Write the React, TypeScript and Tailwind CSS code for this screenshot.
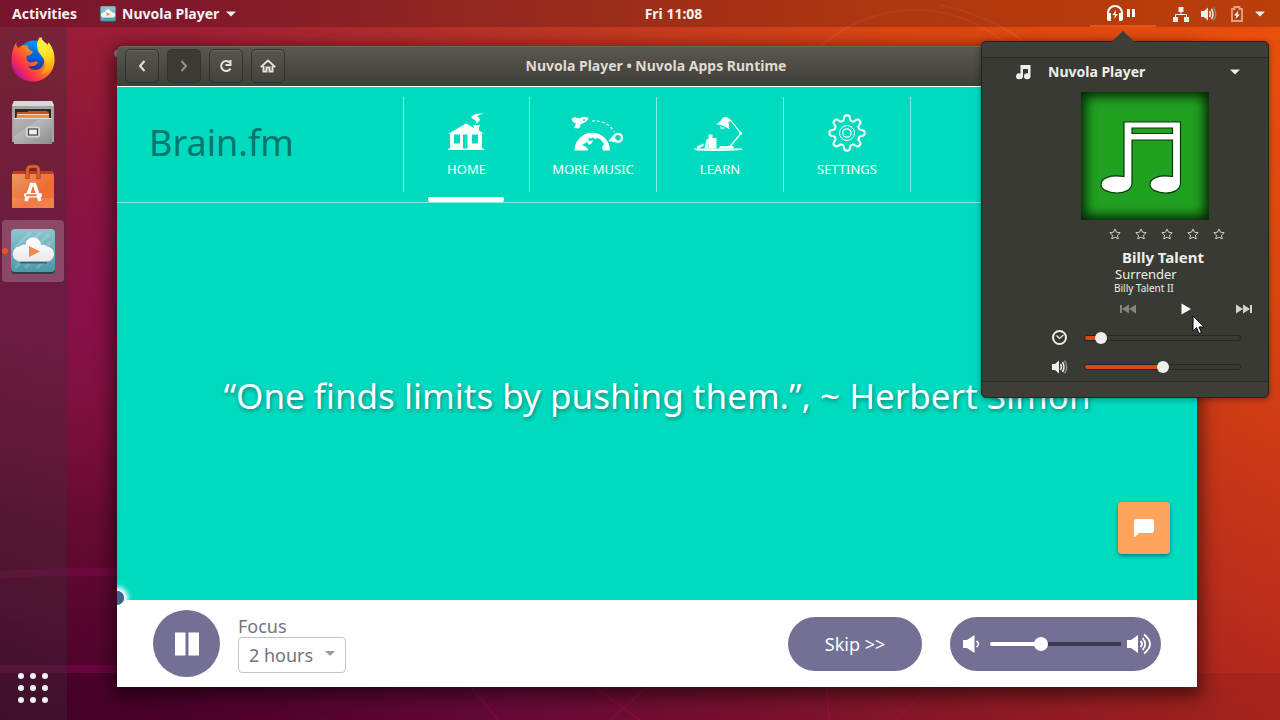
import type { ReactNode } from "react";

const UI = "font-['Noto_Sans','Open_Sans',sans-serif]";

function Wallpaper() {
  return (
    <svg className="absolute inset-0 h-full w-full" viewBox="0 0 1280 720" preserveAspectRatio="none" aria-hidden="true">
      <defs>
        <linearGradient id="base" x1="0" y1="0" x2="1" y2="0">
          <stop offset="0" stopColor="#951b3a" />
          <stop offset="0.15" stopColor="#a01f36" />
          <stop offset="0.35" stopColor="#b5302a" />
          <stop offset="0.7" stopColor="#dc4613" />
          <stop offset="1" stopColor="#ea4f0e" />
        </linearGradient>
        <linearGradient id="low" x1="0" y1="0" x2="1" y2="0">
          <stop offset="0" stopColor="#42002a" />
          <stop offset="0.2" stopColor="#54032f" />
          <stop offset="0.4" stopColor="#6c0a3c" />
          <stop offset="0.6" stopColor="#801232" />
          <stop offset="0.8" stopColor="#981d28" />
          <stop offset="1" stopColor="#b0261e" />
        </linearGradient>
        <linearGradient id="fade" x1="0" y1="0" x2="0" y2="1">
          <stop offset="0.05" stopColor="#fff" stopOpacity="0" />
          <stop offset="0.4" stopColor="#fff" stopOpacity="0.22" />
          <stop offset="1" stopColor="#fff" stopOpacity="1" />
        </linearGradient>
        <mask id="down"><rect width="1280" height="720" fill="url(#fade)" /></mask>
        <radialGradient id="plum" cx="0.05" cy="0.42" r="0.3">
          <stop offset="0" stopColor="#870f4c" stopOpacity="0.9" />
          <stop offset="1" stopColor="#870f4c" stopOpacity="0" />
        </radialGradient>
      </defs>
      <rect width="1280" height="720" fill="url(#base)" />
      <rect width="1280" height="720" fill="url(#low)" mask="url(#down)" />
      <rect width="1280" height="720" fill="url(#plum)" />
      <g fill="none" stroke="#8a0a56" strokeOpacity="0.4">
        <path d="M0 575Q60 570 140 573" strokeWidth="8" />
        <path d="M0 669H140" strokeWidth="8" />
      </g>
      <rect y="673" width="1280" height="47" fill="#1a0010" fillOpacity=".08" />
      <g fill="none" stroke="#f06" strokeOpacity="0.14" strokeWidth="2">
        <path d="M465 680Q482 700 500 722M585 680L640 720M655 680L610 720M826 680L829 720M935 680L895 720" />
      </g>
      <g fill="none" stroke="#fff" strokeOpacity="0.06" strokeWidth="2">
        <circle cx="915" cy="150" r="140" />
        <path d="M940 5Q990 15 1030 46" />
      </g>
    </svg>
  );
}

function NuvolaIcon({ className }: { className: string }) {
  return (
    <svg viewBox="0 0 44 46" className={className} aria-hidden="true">
      <defs>
        <linearGradient id="nv" x1="0" y1="0" x2="0" y2="1">
          <stop offset="0" stopColor="#8cc6d0" />
          <stop offset="1" stopColor="#4a98a8" />
        </linearGradient>
        <linearGradient id="cl" x1="0" y1="0" x2="0" y2="1">
          <stop offset="0" stopColor="#fff" />
          <stop offset="1" stopColor="#e9e9e9" />
        </linearGradient>
      </defs>
      <rect y="2" width="44" height="44" rx="4" fill="#28434f" />
      <rect y="1" width="44" height="43" rx="4" fill="url(#nv)" />
      <path d="M4 20L20 4M4 30L30 4M14 40L40 14M26 40L42 24M4 40L38 6" stroke="#fff" strokeOpacity=".16" strokeWidth="3" />
      <path d="M9 34.500H36" stroke="#2b6573" strokeWidth="2" />
      <path d="M10 33.500a7.500 7.500 0 0 1-1.500-15Q12 15.500 14.500 17C14.500 7 29.500 7 30 17Q33 15.500 36 18.500A7.500 7.500 0 0 1 35 33.500Z" fill="url(#cl)" />
      <path d="M18 18L29 23.500L18 29Z" fill="#f08a4b" />
    </svg>
  );
}

function Firefox() {
  return (
    <svg viewBox="0 0 44 46" className="h-[46px] w-11" aria-hidden="true">
      <defs>
        <linearGradient id="fx" x1="0.9" y1="0.1" x2="0.1" y2="0.85">
          <stop offset="0" stopColor="#fff44f" />
          <stop offset="0.3" stopColor="#ffb21e" />
          <stop offset="0.55" stopColor="#ff6a24" />
          <stop offset="0.8" stopColor="#fa2a52" />
          <stop offset="1" stopColor="#b5179e" />
        </linearGradient>
        <linearGradient id="fy" x1="0.3" y1="0" x2="0.5" y2="1">
          <stop offset="0" stopColor="#fff44f" />
          <stop offset="0.5" stopColor="#ffe226" />
          <stop offset="1" stopColor="#ff980e" />
        </linearGradient>
        <linearGradient id="fb" x1="0.7" y1="0" x2="0.4" y2="1">
          <stop offset="0" stopColor="#00a3f4" />
          <stop offset="0.5" stopColor="#0060df" />
          <stop offset="1" stopColor="#3a1c7c" />
        </linearGradient>
      </defs>
      <circle cx="23" cy="21" r="16.500" fill="url(#fb)" />
      <path d="M5.500 6C5 9 6 11 7.500 12C9 10 12 9 14 9.500L17 9C16 12 18 14 22 15.500C21 18.500 18 19.500 16 20C14.500 22.500 16 25 18 26C22 27.500 24 24 27 26.500C25 30 21 31 17 30C21 36 31 35 33 27C34 20 29 17 27.500 13C26 8 28 3 30.500 1C31 5 35 7 37 9L37.500 6.500C42 12 44 18 43.500 25C43 37 33 45.500 22 45.500C9 45.500 0 36 0.500 24C0.500 17 2.500 10 5.500 6Z" fill="url(#fx)" />
      <path d="M29 1C31 5 35 7 37 9L37.500 6.500C42 12 44 20 42 27C39 37 33 38 30 38C35 33 36 28 33 23C29 18 22 11 29 1Z" fill="url(#fy)" />
    </svg>
  );
}

function Files() {
  return (
    <svg viewBox="0 0 44 46" className="h-[46px] w-11" aria-hidden="true">
      <defs>
        <linearGradient id="fl" x1="0" y1="0" x2="1" y2="1">
          <stop offset="0" stopColor="#b5b5b5" />
          <stop offset="0.35" stopColor="#a9a9a9" />
          <stop offset="0.36" stopColor="#b9b9b9" />
          <stop offset="1" stopColor="#8a8a8a" />
        </linearGradient>
      </defs>
      <path d="M3 1H41L43 5V42H1V5Z" fill="#a5a5a5" />
      <path d="M3 1H41L43 6H1Z" fill="#d9d9d9" />
      <rect x="4" y="9" width="36" height="10" fill="#292929" />
      <path d="M6 12H17V11H36L38 13V20H5Z" fill="#c5571b" />
      <path d="M6 14H38V20H6Z" fill="#eb9149" />
      <path d="M6 14.500H38" stroke="#f8d2a8" strokeWidth="1" />
      <path d="M3 18H41V44H3Z" fill="url(#fl)" />
      <path d="M3 18.500H41" stroke="#dedede" />
      <rect x="15" y="26.500" width="14" height="11" rx="2" fill="#d4d4d4" />
      <rect x="17.500" y="29" width="9" height="6" fill="#eee" stroke="#444" strokeWidth="1.200" />
    </svg>
  );
}

function Software() {
  return (
    <svg viewBox="0 0 44 46" className="h-[46px] w-11" aria-hidden="true">
      <defs>
        <linearGradient id="sw" x1="0" y1="0" x2="1" y2="1">
          <stop offset="0" stopColor="#eb9a63" />
          <stop offset="0.6" stopColor="#ef6c33" />
          <stop offset="1" stopColor="#f0763f" />
        </linearGradient>
      </defs>
      <path d="M2 7H42L43 11H1Z" fill="#b8401b" />
      <path d="M1 10H43V44H1Z" fill="url(#sw)" />
      <path d="M1 34H43V44H1Z" fill="#fff" fillOpacity=".1" />
      <path d="M16.500 15V6Q16.500 2.500 20 2.500H24Q27.500 2.500 27.500 6V15" fill="none" stroke="#9a3413" strokeWidth="4" />
      <path d="M16.500 14.500V6Q16.500 2.500 20 2.500H24Q27.500 2.500 27.500 6V14.500" fill="none" stroke="#e0612c" strokeWidth="2.600" />
      <path d="M15 37L20.500 20.500H23.500L29 37" fill="none" stroke="#fff" strokeWidth="3.600" />
      <rect x="13" y="29" width="18" height="4.500" rx="2" fill="#fff" />
      <rect x="15" y="30.200" width="11" height="2" rx="1" fill="#ee7a3e" />
    </svg>
  );
}

function HomeArt() {
  return (
    <svg viewBox="0 0 52 40" className="h-10 w-[52px]" fill="#fff" aria-hidden="true">
      <path d="M7 21L25 10.500L33 15V13.500H32V12H39V13.500H38V17.500L43 20.500H41V35.500H43V37H7V35.500H9V21Z" />
      <g fill="#00dbc0">
        <rect x="13" y="21.500" width="6" height="9" />
        <rect x="22" y="21.500" width="4.500" height="14" />
        <rect x="31" y="21.500" width="6" height="9" />
      </g>
      <path d="M24.500 21.500V35.500" stroke="#fff" strokeOpacity=".3" strokeWidth=".5" />
      <path d="M34 10.500Q37 8 32 6Q28 4 33.500 1.500Q37 0 43 .5Q37 2 36 3.500Q40 5.500 38.500 8Q37 10 34 10.500Z" />
    </svg>
  );
}

function MusicArt() {
  return (
    <svg viewBox="-8 0 62 40" className="h-10 w-[62px]" fill="#fff" aria-hidden="true">
      <path d="M4.500 37.500A17.700 17.700 0 0 1 40 37.500H33L32 34L34 31L31 27L28 25L25 26L23 24.500L20 25.500L18 25L19 28L23 27.500L22 30L19 32L17 29L14 31L12 32L16 34L18 36L18 37.500Z" />
      <path d="M1.500 5.500L5 4L9 5.500Q14 3 18.500 5Q17 9 11 11L9 15.500L4 15L6 10.500Q2 9.500 1.500 5.500Z" />
      <circle cx="14" cy="7" r="1" fill="#00dbc0" />
      <path d="M22 8Q37 7 44 18.500" fill="none" stroke="#fff" strokeWidth="1.200" strokeDasharray="3 2" />
      <path fillRule="evenodd" d="M38.500 28L43.500 22A5.200 5.200 0 1 1 48.500 30ZM48 22A2.700 2.700 0 1 0 48 27.500A2.700 2.700 0 1 0 48 22Z" />
    </svg>
  );
}

function LearnArt() {
  return (
    <svg viewBox="0 0 54 40" className="h-10 w-[54px]" fill="#fff" aria-hidden="true">
      <path d="M0 35.500H49V37Q26 38.500 4 37.500Z" />
      <path d="M26 35.500Q26 33 29 33H39Q41 33 41 35.500Z" />
      <path d="M37 33.500L48 20.500L37 6.500" fill="none" stroke="#fff" strokeWidth="1.200" />
      <circle cx="47.500" cy="20.500" r="1.600" />
      <path d="M29 5.500Q30 3.500 34 4Q36 4.500 37.500 7.500L35.500 9.500L36.500 16.500Q30 11.500 23 11.500Q28 8.500 29 5.500Z" />
      <path d="M27 13.500Q27 16.500 29.500 16.500Q32 16.500 32 14.500Z" fillOpacity=".6" />
      <path d="M4 33.500L10 30.500L11 32.500L6 35.500H4ZM11.500 35.500L13.500 26L15.500 26.500L15 35.500ZM15.500 21.500H19.500V25H23.500V35.500H15.500Z" />
    </svg>
  );
}

const gearPath = Array.from({ length: 97 }, (_, i) => {
  const t = (i / 96) * Math.PI * 2;
  const r = 15.2 + 2.5 * Math.tanh(2.2 * Math.cos(8 * t));
  return `${i ? "L" : "M"}${(20 + r * Math.cos(t)).toFixed(2)} ${(20 + r * Math.sin(t)).toFixed(2)}`;
}).join("") + "Z";

function SettingsArt() {
  return (
    <svg viewBox="0 0 40 40" className="size-10" fill="none" stroke="#fff" aria-hidden="true">
      <path d={gearPath} strokeWidth="2" strokeLinejoin="round" />
      <circle cx="20" cy="20" r="7.500" strokeWidth="1" />
      <circle cx="20" cy="20" r="4.200" strokeWidth="1.200" />
    </svg>
  );
}

function Speaker({ className }: { className: string }) {
  return (
    <svg viewBox="0 0 16 16" className={className} fill="none" aria-hidden="true">
      <path d="M0 5H3L7 1.500V14.500L3 11H0Z" fill="#eee" />
      <path d="M8.500 5Q10.500 8 8.500 11M10.500 3Q13.500 8 10.500 13" stroke="#eee" strokeWidth="1.500" />
      <path d="M12.500 1.500Q17 8 12.500 14.500" stroke="#888" strokeWidth="1.500" />
    </svg>
  );
}

function Caret({ className = "" }: { className?: string }) {
  return (
    <svg viewBox="0 0 10 6" className={`h-1.5 w-2.5 ${className}`} fill="#eee" aria-hidden="true">
      <path d="M0 .5H10L5 5.500Z" />
    </svg>
  );
}

function AlbumNote() {
  return (
    <svg viewBox="0 0 82 74" className="h-[74px] w-[82px]" aria-hidden="true">
      <path
        fillRule="evenodd"
        d="M24 1H80.500V62C80.500 68.500 74 72 66 72C57 72 50 68.500 50 63.500C50 57 59 53.500 72.500 55.500V19H32V62C32 68.500 25 72 17 72C8 72 1 68.500 1 63.500C1 57 10 53.500 24 55.500ZM32 7V12.500H72.500V7Z"
        fill="#fff"
        stroke="#0b3a0b"
        strokeWidth="1.200"
      />
    </svg>
  );
}

function TitleButton({ label, dim, children }: { label: string; dim?: boolean; children: ReactNode }) {
  return (
    <button
      aria-label={label}
      className={`flex size-[34px] items-center justify-center rounded-[5px] border border-[#32312d] ${dim ? "bg-[#3b3a35] text-[#96948e]" : "bg-linear-to-b from-[#57544d] to-[#45433e] text-[#e5e2dc] shadow-[inset_0_1px_0_#68655d]"}`}
    >
      <svg viewBox="0 0 16 16" className="size-4" fill="none" stroke="currentColor" strokeWidth="2" aria-hidden="true">
        {children}
      </svg>
    </button>
  );
}

function NavItem({ label, active, children }: { label: string; active?: boolean; children: ReactNode }) {
  return (
    <li className="relative w-[127px] border-r border-white/50 first:w-[126px]">
      <a href="#" className="flex h-full flex-col items-center pt-4 text-[13px] leading-4 text-white">
        {children}
        <span className="mt-2">{label}</span>
      </a>
      {active && <span className="absolute -bottom-2.5 left-6 h-[5px] w-[76px] rounded-xs bg-white" />}
    </li>
  );
}

function PanelSlider({ label, value, fill }: { label: string; value: number; fill: string }) {
  return (
    <input
      type="range"
      aria-label={label}
      defaultValue={value}
      className={`h-3.5 w-[157px] appearance-none bg-transparent [&::-webkit-slider-runnable-track]:h-1.5 [&::-webkit-slider-runnable-track]:rounded-full [&::-webkit-slider-runnable-track]:border [&::-webkit-slider-runnable-track]:border-[#262622] [&::-webkit-slider-thumb]:-mt-1 [&::-webkit-slider-thumb]:size-3 [&::-webkit-slider-thumb]:appearance-none [&::-webkit-slider-thumb]:rounded-full [&::-webkit-slider-thumb]:bg-[#eeeeec] ${fill}`}
    />
  );
}

function Star() {
  return (
    <button aria-label="Rate" className="flex size-3 items-center justify-center">
      <svg viewBox="0 0 12 12" className="size-3" fill="none" stroke="#d0d0cc" aria-hidden="true">
        <path d="M6 1L7.500 4.200L11.200 4.700L8.500 7.200L9.200 10.900L6 9.100L2.800 10.900L3.500 7.200L.8 4.700L4.500 4.200Z" />
      </svg>
    </button>
  );
}

function PlayerMenu() {
  return (
    <section className="absolute top-[41px] right-[11px] w-72 rounded-[5px] border border-[#24241f] bg-[#3a3a34] text-[#eeeeec] shadow-[0_1px_6px_rgba(0,0,0,0.4)]">
      <svg viewBox="0 0 26 12" className="absolute -top-[11px] left-32 h-3 w-[26px]" aria-hidden="true">
        <path d="M0 12L13 0L26 12Z" fill="#3e3d38" />
      </svg>
      <div className="h-4 rounded-t-[5px] border-b border-[#2b2b27] bg-[#3e3d38]" />
      <div className="flex h-7 items-center pr-7 pl-[33px]">
        <svg viewBox="0 0 16 16" className="mr-4 size-4" fill="#eee" aria-hidden="true">
          <path d="M5.500 1H15.500V12.500A3 2.500 0 1 1 13 10V5H8V12.500A3 2.500 0 1 1 5.500 10Z" />
          <circle cx="4" cy="12.300" r="3" />
          <circle cx="12" cy="12.300" r="3" />
        </svg>
        <h2 className="flex-1 pl-px text-sm font-bold">Nuvola Player</h2>
        <button aria-label="Collapse"><Caret /></button>
      </div>
      <div className="mt-1.5 ml-[99px] flex h-32 w-32 justify-center bg-[#21a021] pt-[29px] pr-2 shadow-[inset_0_0_12px_4px_#041f04]">
        <AlbumNote />
      </div>
      <div className="mt-2 ml-[127px] flex gap-3.5">
        <Star /><Star /><Star /><Star /><Star />
      </div>
      <div className="mt-2 ml-[132px]">
        <p className="ml-2 text-[15px] leading-[18px] font-bold">Billy Talent</p>
        <p className="pl-px text-[13px] leading-4">Surrender</p>
        <p className="text-[10px] leading-3">Billy Talent II</p>
      </div>
      <div className="mt-[9px] mr-4 ml-[138px] flex items-center justify-between">
        <button aria-label="Previous" className="text-[#85857f]">
          <svg viewBox="0 0 16 10" className="h-2.5 w-4" fill="currentColor" aria-hidden="true"><path d="M0 1H2V9H0ZM9 .5V9.500L2 5ZM16 .5V9.500L9 5Z" /></svg>
        </button>
        <button aria-label="Play">
          <svg viewBox="0 0 10 12" className="h-3 w-2.5" fill="#fff" aria-hidden="true"><path d="M.5 0.500L10 6L.5 11.500Z" /></svg>
        </button>
        <button aria-label="Next" className="text-[#d2d2ce]">
          <svg viewBox="0 0 16 10" className="h-2.5 w-4" fill="currentColor" aria-hidden="true"><path d="M14 1H16V9H14ZM0 .5V9.500L7 5ZM7 .5V9.500L14 5Z" /></svg>
        </button>
      </div>
      <div className="mt-3.5 ml-[70px] flex flex-col gap-3 pb-1.5">
        <div className="flex h-[17px] items-center gap-4">
          <svg viewBox="0 0 16 16" className="size-4" fill="none" stroke="#eee" aria-hidden="true">
            <circle cx="7.500" cy="7.500" r="6.500" strokeWidth="2" />
            <path d="M4.500 5.500L7.500 8.500L11.500 5" strokeWidth="1.200" />
          </svg>
          <PanelSlider label="Position" value={7} fill="[&::-webkit-slider-runnable-track]:bg-linear-to-r [&::-webkit-slider-runnable-track]:from-[#dd4814] [&::-webkit-slider-runnable-track]:from-10% [&::-webkit-slider-runnable-track]:to-[#3a3a34] [&::-webkit-slider-runnable-track]:to-10%" />
        </div>
        <div className="flex h-[17px] items-center gap-4">
          <Speaker className="size-4" />
          <PanelSlider label="Volume" value={50} fill="[&::-webkit-slider-runnable-track]:bg-linear-to-r [&::-webkit-slider-runnable-track]:from-[#dd4814] [&::-webkit-slider-runnable-track]:from-50% [&::-webkit-slider-runnable-track]:to-[#3a3a34] [&::-webkit-slider-runnable-track]:to-50%" />
        </div>
      </div>
      <div className="h-4 rounded-b-[5px] border-t border-[#2b2b27] bg-[#3e3d38]" />
    </section>
  );
}

function TopBar() {
  return (
    <header className="relative flex h-[27px] items-center justify-between bg-black/20 text-sm font-bold text-[#f2f2f2]">
      <div className="flex flex-1 items-center pl-3">
        <button>Activities</button>
        <button className="ml-[23px] flex items-center">
          <NuvolaIcon className="mr-1.5 size-4" />
          Nuvola Player
          <Caret className="ml-[7px]" />
        </button>
      </div>
      <time className="pl-[70px]">Fri 11:08</time>
      <div className="flex h-full flex-1 items-center justify-end pr-[15px]">
        <button aria-label="Media player" className="mr-[17px] flex h-full w-[66px] items-center justify-center gap-1 border-b-2 border-[#e95420] pr-1">
          <svg viewBox="0 0 16 16" className="size-4" fill="none" aria-hidden="true">
            <path d="M1 13V8A7 7 0 0 1 15 8V13" stroke="#fff" strokeWidth="2" />
            <path d="M0 8H4V16H2Q0 16 0 14ZM16 8H12V16H14Q16 16 16 14ZM9 5L5.500 10H8L7 14L11 9H8.500Z" fill="#fff" />
          </svg>
          <svg viewBox="0 0 8 8" className="size-2" fill="#fff" aria-hidden="true"><path d="M0 0H3V8H0ZM5 0H8V8H5Z" /></svg>
        </button>
        <button aria-label="System menu" className="flex items-center gap-3">
          <svg viewBox="0 0 16 16" className="size-4" aria-hidden="true">
            <path d="M5.500 1H10.500V6H5.500ZM0 11H5V16H0ZM11 11H16V16H11Z" fill="#eee" />
            <path d="M8 5V8.500M2.500 11V8.500H13.500V11" fill="none" stroke="#eee" />
          </svg>
          <Speaker className="size-4" />
          <svg viewBox="0 0 12 16" className="ml-0.5 h-4 w-3" aria-hidden="true">
            <path d="M3.500 3V1H8.500V3H11V15H1V3Z" fill="none" stroke="#d8a68e" strokeWidth="1.800" />
            <path d="M7.500 4.500L3 9.500H5.500L4.500 13L9 8.500H6.500Z" fill="#fff" />
          </svg>
          <Caret />
        </button>
      </div>
    </header>
  );
}

function Dock() {
  return (
    <nav aria-label="Dock" className="flex w-[67px] flex-col justify-between bg-[#3c3036]/35 px-0.5 pt-px pb-3.5">
      <ul className="flex flex-col gap-0.5">
        <li><button aria-label="Firefox" className="flex size-[62px] items-center justify-center"><Firefox /></button></li>
        <li><button aria-label="Files" className="flex size-[62px] items-center justify-center"><Files /></button></li>
        <li><button aria-label="Ubuntu Software" className="flex size-[62px] items-center justify-center"><Software /></button></li>
        <li className="relative">
          <button aria-label="Nuvola Player" className="flex size-[62px] items-center justify-center rounded bg-white/20"><NuvolaIcon className="h-[46px] w-11" /></button>
          <span className="absolute top-7 left-0 size-1.5 rounded-full bg-[#e95420]" />
        </li>
      </ul>
      <button aria-label="Show applications" className="flex w-[62px] justify-center">
        <svg viewBox="0 0 36 36" className="size-9" fill="#f0f0f0" aria-hidden="true">
          {[6, 18, 30].map((y) => [6, 18, 30].map((x) => <circle key={`${x}-${y}`} cx={x} cy={y} r="3" />))}
        </svg>
      </button>
    </nav>
  );
}

function AppWindow() {
  return (
    <main className="relative flex flex-1 flex-col rounded-t-md shadow-[0_5px_18px_4px_rgba(0,0,0,0.55)]">
      <div className="flex h-[41px] items-center rounded-t-md border-b border-white bg-linear-to-b from-[#5b584f] to-[#3f3e39] pl-2 shadow-[inset_0_1px_0_#6b685f]">
        <div className="flex gap-2">
          <TitleButton label="Back"><path d="M10.500 3L6 8L10.500 13" /></TitleButton>
          <TitleButton label="Forward" dim><path d="M5.500 3L10 8L5.500 13" /></TitleButton>
          <TitleButton label="Reload"><path d="M12 4.800A5 5 0 1 0 12.500 10.500M12.500 2V7H7.500" /></TitleButton>
          <TitleButton label="Home"><path d="M.8 9L8 2.500L15.200 9M3.500 8V13.500H6.500V9.500H9.500V13.500H12.500V8" /></TitleButton>
        </div>
        <h1 className="flex-1 pr-[170px] text-center text-sm font-bold text-[#dfdbd2]">Nuvola Player • Nuvola Apps Runtime</h1>
      </div>
      <div className="flex h-[116px] border-b border-white/50 bg-[#00dbc0] py-2.5">
        <div className="flex w-[286px] items-center pb-1 pl-8 text-4xl text-[#04766c]">Brain.fm</div>
        <ul className="flex border-l border-white/50">
          <NavItem label="HOME" active><HomeArt /></NavItem>
          <NavItem label="MORE MUSIC"><MusicArt /></NavItem>
          <NavItem label="LEARN"><LearnArt /></NavItem>
          <NavItem label="SETTINGS"><SettingsArt /></NavItem>
        </ul>
      </div>
      <div className="relative flex flex-1 items-center justify-center overflow-hidden bg-[#00dbc0]">
        <blockquote className="pb-2.5 text-[35px] whitespace-nowrap text-white [text-shadow:1px_2px_4px_rgba(0,0,0,0.4)]">
          “One finds limits by pushing them.”, ~ Herbert Simon
        </blockquote>
        <button aria-label="Open chat" className="absolute right-[27px] bottom-[46px] flex size-[52px] items-center justify-center rounded bg-[#ffa45c] shadow-[0_2px_4px_rgba(0,0,0,0.4)]">
          <svg viewBox="0 0 20 18" className="h-[18px] w-5" fill="#fff" aria-hidden="true"><path d="M3 0H17Q20 0 20 3V11Q20 14 17 14H5L1 18H0V3Q0 0 3 0Z" /></svg>
        </button>
        <span className="absolute -bottom-[5px] -left-[7px] size-3.5 rounded-full bg-[#46608f] shadow-[0_0_5px_4px_white]" />
      </div>
      <footer className="relative flex h-[87px] items-center bg-white px-9 text-lg text-[#757575]">
        <span className="absolute -top-[9px] left-0 h-3.5 w-[7px] rounded-r-full bg-[#46608f]" />
        <button aria-label="Pause" className="flex size-[67px] items-center justify-center rounded-full bg-[#737095]">
          <svg viewBox="0 0 24 24" className="size-6" fill="#fff" aria-hidden="true"><path d="M0 .5H10.500V23.500H0ZM13.500 .5H24V23.500H13.500Z" /></svg>
        </button>
        <div className="ml-[18px] flex flex-1 flex-col items-start">
          <label htmlFor="length" className="leading-[22px]">Focus</label>
          <div className="relative">
            <select id="length" className="h-9 w-[108px] appearance-none rounded border border-[#c4c4c4] bg-white pl-2.5">
              <option>2 hours</option>
            </select>
            <svg viewBox="0 0 10 5" className="pointer-events-none absolute top-3.5 right-[11px] h-[5px] w-2.5" fill="#999" aria-hidden="true"><path d="M0 0H10L5 5Z" /></svg>
          </div>
        </div>
        <button className="h-[54px] w-[134px] rounded-full bg-[#737095] text-white">Skip &gt;&gt;</button>
        <div className="ml-7 flex h-[54px] w-[211px] items-center rounded-full bg-[#737095] pl-3">
          <svg viewBox="0 0 20 20" className="size-5" fill="none" aria-hidden="true">
            <path d="M1 6H5L12.500 1V19L5 14H1Z" fill="#fff" />
            <path d="M14.500 7Q18.500 10 14.500 13" stroke="#fff" strokeWidth="1.600" />
          </svg>
          <input
            type="range"
            aria-label="Player volume"
            defaultValue={38}
            className="mr-1.5 ml-2 h-4 w-[131px] appearance-none bg-transparent [&::-webkit-slider-runnable-track]:h-1 [&::-webkit-slider-runnable-track]:rounded-l-full [&::-webkit-slider-runnable-track]:bg-linear-to-r [&::-webkit-slider-runnable-track]:from-white [&::-webkit-slider-runnable-track]:from-40% [&::-webkit-slider-runnable-track]:to-[#3c3950] [&::-webkit-slider-runnable-track]:to-40% [&::-webkit-slider-thumb]:-mt-[5px] [&::-webkit-slider-thumb]:size-3.5 [&::-webkit-slider-thumb]:appearance-none [&::-webkit-slider-thumb]:rounded-full [&::-webkit-slider-thumb]:bg-white"
          />
          <svg viewBox="0 0 26 22" className="h-[22px] w-[26px]" fill="none" aria-hidden="true">
            <path d="M0 7H4L11 2V20L4 15H0Z" fill="#fff" />
            <path d="M13.500 8Q16.500 11 13.500 14M15.500 5Q21 11 15.500 17M17 1.500Q29 11 17 20.500" stroke="#fff" strokeWidth="1.800" />
          </svg>
        </div>
      </footer>
    </main>
  );
}

export default function App() {
  return (
    <div className={`relative flex min-h-screen flex-col overflow-hidden ${UI}`}>
      <Wallpaper />
      <TopBar />
      <div className="relative flex flex-1">
        <Dock />
        <div className="relative flex flex-1 pt-[19px] pr-[83px] pb-[33px] pl-[50px]">
          <span className="absolute top-[23px] left-[47px] h-[7px] w-2 rounded-sm bg-[#8a8583]" />
          <AppWindow />
        </div>
      </div>
      <PlayerMenu />
      <svg viewBox="0 0 13 20" className="pointer-events-none absolute top-[315px] right-[75px] h-5 w-[13px]" aria-hidden="true">
        <path d="M1 1V16L4.500 12.500L7 18.500L9.500 17.500L7 12H12Z" fill="#fff" stroke="#000" />
      </svg>
    </div>
  );
}
